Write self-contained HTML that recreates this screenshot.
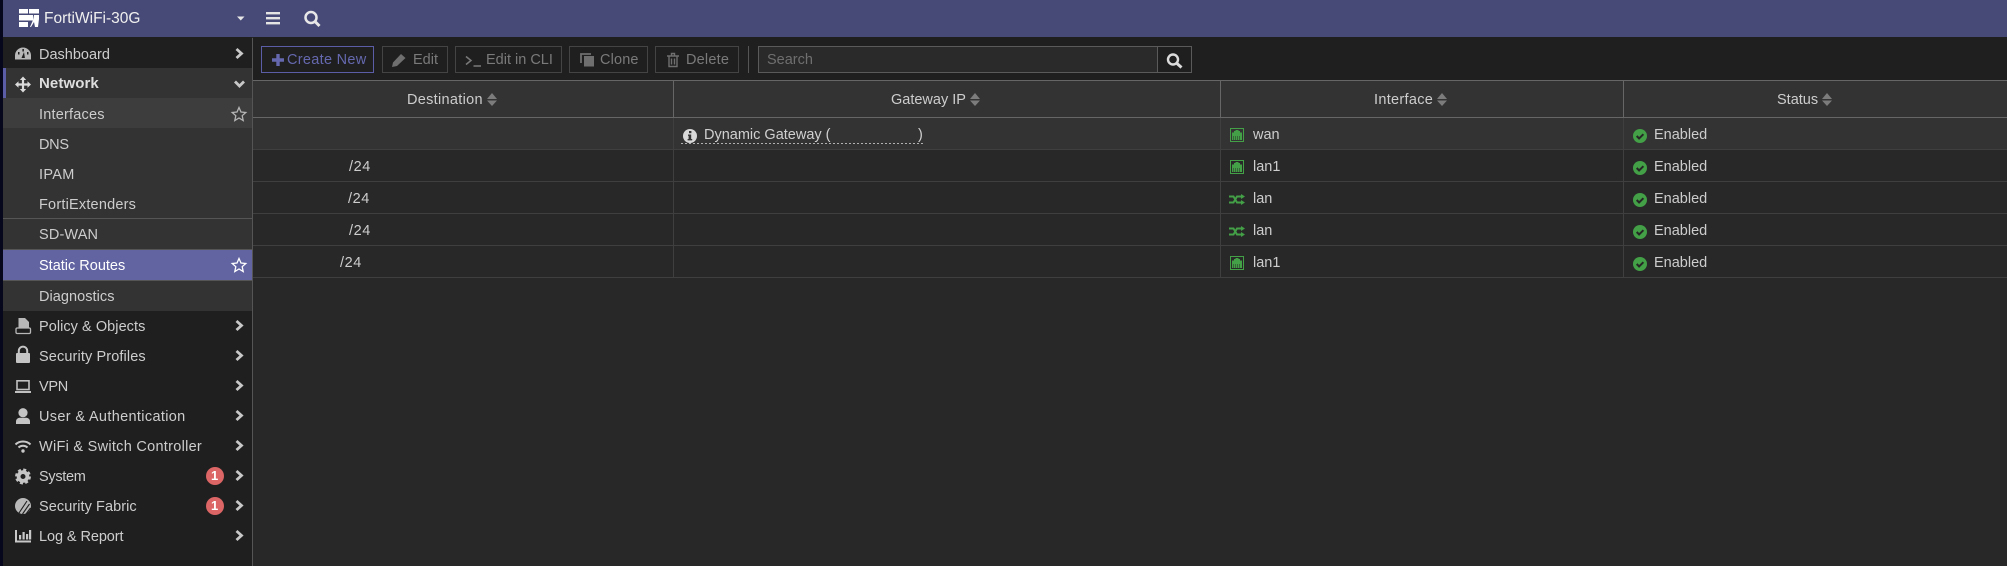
<!DOCTYPE html>
<html><head><meta charset="utf-8"><style>
html,body{margin:0;padding:0;width:2007px;height:566px;overflow:hidden;background:#282828}
body{position:relative;font-family:"Liberation Sans",sans-serif;font-size:14.5px;color:#cdcdcd}
.b{position:absolute}
.t{position:absolute;line-height:20px;white-space:nowrap}
svg{position:absolute;overflow:visible}
.btn{position:absolute;top:46px;height:25px;border:1px solid #444;background:#1f1f1f;box-sizing:content-box}
.d{color:#7a7a7a}
.r{letter-spacing:.6px}
</style></head><body>
<div class="b" style="left:0;top:0;width:3px;height:566px;background:#06061c"></div>
<div class="b" style="left:3px;top:0;width:2004px;height:37px;background:#474a76"></div>
<div class="b" style="left:3px;top:38px;width:249px;height:528px;background:#1f1f1f"></div>
<div class="b" style="left:252px;top:38px;width:1px;height:528px;background:#555"></div>
<div class="b" style="left:253px;top:37px;width:1754px;height:43px;background:#1f1f1f"></div>
<div class="b" style="left:3px;top:37px;width:249px;height:1px;background:#1f1f1f"></div>
<div class="b" style="left:3px;top:68px;width:249px;height:243px;background:#333"></div>
<div class="b" style="left:3px;top:68px;width:3px;height:30px;background:#5b5ea6"></div>
<div class="b" style="left:3px;top:98px;width:249px;height:30px;background:#3d3d3d"></div>
<div class="b" style="left:3px;top:218px;width:249px;height:1px;background:#555"></div>
<div class="b" style="left:3px;top:249px;width:249px;height:32px;background:#6264a2;border-top:1px solid #555;border-bottom:1px solid #555;box-sizing:border-box"></div>

<svg style="left:0;top:0" width="260" height="38">
<g fill="#fff"><rect x="19" y="9" width="9" height="4.500"/><rect x="29" y="9" width="10" height="4.500"/><rect x="19" y="15" width="14" height="5.500"/><rect x="19" y="22" width="9" height="5"/><path d="M34 15h5v4l-1 8h-3l-1-5-3 5h-1l3-7z"/></g>
<path d="M237 16.500h7.500l-3.750 4z" fill="#e8e8e8"/>
<g fill="#e4e4e4"><rect x="266" y="12" width="14" height="2.400"/><rect x="266" y="17" width="14" height="2.400"/><rect x="266" y="22" width="14" height="2.400"/></g>
<circle cx="311" cy="17.500" r="5.500" fill="none" stroke="#e8e8e8" stroke-width="2.500"/><path d="M315 21.500l4.500 4.500" stroke="#e8e8e8" stroke-width="3"/>
</svg>
<div class="t" style="left:44px;top:9px;font-size:15.500px;color:#f0f0f0">FortiWiFi-30G</div>

<div class="t" style="left:39px;top:45px">Dashboard</div>
<div class="t" style="left:39px;top:74px;font-weight:bold;color:#dedede;font-size:15px;letter-spacing:.1px">Network</div>
<div class="t" style="left:39px;top:105px;letter-spacing:.2px">Interfaces</div>
<div class="t" style="left:39px;top:135px;letter-spacing:-.3px">DNS</div>
<div class="t" style="left:39px;top:165px;letter-spacing:.3px">IPAM</div>
<div class="t" style="left:39px;top:195px;letter-spacing:.2px">FortiExtenders</div>
<div class="t" style="left:39px;top:225px;letter-spacing:.15px">SD-WAN</div>
<div class="t" style="left:39px;top:256px;color:#fff">Static Routes</div>
<div class="t" style="left:39px;top:287px;letter-spacing:.05px">Diagnostics</div>
<div class="t" style="left:39px;top:317px;letter-spacing:.05px">Policy &amp; Objects</div>
<div class="t" style="left:39px;top:347px;letter-spacing:.12px">Security Profiles</div>
<div class="t" style="left:39px;top:377px;letter-spacing:-.3px">VPN</div>
<div class="t" style="left:39px;top:407px;letter-spacing:.34px">User &amp; Authentication</div>
<div class="t" style="left:39px;top:437px;letter-spacing:.28px">WiFi &amp; Switch Controller</div>
<div class="t" style="left:39px;top:467px;letter-spacing:-.3px">System</div>
<div class="t" style="left:39px;top:497px;letter-spacing:.07px">Security Fabric</div>
<div class="t" style="left:39px;top:527px;letter-spacing:-.08px">Log &amp; Report</div>

<svg style="left:0;top:0" width="260" height="566">
<g fill="none" stroke="#c8c8c8" stroke-width="2.800">
<path d="M236.500 49l5 4.500-5 4.500"/><path d="M235 81.500l4.500 4.500 4.500-4.500"/>
<path d="M236.500 321l5 4.500-5 4.500"/><path d="M236.500 351l5 4.500-5 4.500"/><path d="M236.500 381l5 4.500-5 4.500"/><path d="M236.500 411l5 4.500-5 4.500"/><path d="M236.500 441l5 4.500-5 4.500"/><path d="M236.500 471l5 4.500-5 4.500"/><path d="M236.500 501l5 4.500-5 4.500"/><path d="M236.500 531l5 4.500-5 4.500"/>
</g>
<path d="M239 107.500l2 4.500 4.800.5-3.600 3.200 1 4.800-4.200-2.500-4.200 2.500 1-4.800-3.600-3.200 4.800-.5z" fill="none" stroke="#b5b5b5" stroke-width="1.300"/>
<path d="M239 258.500l2 4.500 4.800.5-3.600 3.200 1 4.800-4.200-2.500-4.200 2.500 1-4.800-3.600-3.200 4.800-.5z" fill="none" stroke="#fff" stroke-width="1.300"/>
<path d="M15 59.500v-4a8 8 0 0 1 16 0v4z" fill="#b8b8b8"/>
<g fill="#1f1f1f"><rect x="22.400" y="49" width="1.500" height="2.500"/><rect x="18" y="52" width="1.500" height="2.500"/><rect x="27" y="52" width="1.500" height="2.500"/><path d="M21.500 58l2.500-6 .9 6z"/></g>
<path d="M23 78v13M16.500 84.500h13" stroke="#dcdcdc" stroke-width="2.200"/>
<path d="M23 76.500l3.200 3.500h-6.400zM23 92.500l3.200-3.500h-6.400zM15 84.500l3.500-3.200v6.400zM31 84.500l-3.500-3.200v6.400z" fill="#dcdcdc"/>
<path d="M18.500 318h6.500l4 4v7h-10.500z" fill="#b8b8b8"/><rect x="16" y="328" width="14.500" height="5.500" rx="1.200" fill="#1f1f1f" stroke="#b8b8b8" stroke-width="1.300"/>
<path d="M18.800 353v-2.200a4.200 4.200 0 0 1 8.400 0v2.200" fill="none" stroke="#c4c4c4" stroke-width="2"/><rect x="16" y="353" width="14" height="10" rx="1" fill="#c4c4c4"/>
<rect x="17" y="380.800" width="12" height="8.700" fill="none" stroke="#c0c0c0" stroke-width="1.600"/><rect x="15" y="391" width="16" height="2" fill="#c0c0c0"/>
<circle cx="23" cy="412.700" r="4.600" fill="#c4c4c4"/><path d="M16 424v-2.500c0-2.500 2-3.800 4-3.800h6c2 0 4 1.300 4 3.800v2.500z" fill="#c4c4c4"/>
<g fill="none" stroke="#c8c8c8" stroke-width="2"><path d="M15.500 444.500a11 11 0 0 1 15 0"/><path d="M18.500 447.500a6.500 6.500 0 0 1 9 0"/></g><circle cx="23" cy="451" r="1.700" fill="#c8c8c8"/>
<circle cx="23" cy="476.500" r="4.400" fill="none" stroke="#c4c4c4" stroke-width="3.800"/><circle cx="23" cy="476.500" r="6.800" fill="none" stroke="#c4c4c4" stroke-width="2.300" stroke-dasharray="3 2.340"/>
<circle cx="23" cy="506" r="8" fill="#b8b8b8"/><g stroke="#1f1f1f" stroke-width="1.100"><path d="M19 513l8-12M22.500 514l7-10M26 514l4.500-6"/></g>
<path d="M16 530v11.500h15" fill="none" stroke="#c8c8c8" stroke-width="2"/><g fill="#c8c8c8"><rect x="19" y="535" width="2.200" height="4.500"/><rect x="22.500" y="532" width="2.200" height="7.500"/><rect x="26" y="534" width="2.200" height="5.500"/><rect x="29" y="530" width="2.200" height="9.500"/></g>
<circle cx="215" cy="476" r="9" fill="#dc6565"/><circle cx="215" cy="506" r="9" fill="#dc6565"/>
</svg>
<div class="t" style="left:211px;top:466px;font-size:13px;color:#fff;font-weight:bold">1</div>
<div class="t" style="left:211px;top:496px;font-size:13px;color:#fff;font-weight:bold">1</div>

<div class="btn" style="left:261px;width:111px;border-color:#5b5ea6"></div>
<div class="btn" style="left:382px;width:64px"></div>
<div class="btn" style="left:455px;width:105px"></div>
<div class="btn" style="left:569px;width:77px"></div>
<div class="btn" style="left:655px;width:82px"></div>
<div class="b" style="left:748px;top:46px;width:1px;height:27px;background:#555"></div>
<div class="b" style="left:758px;top:46px;width:398px;height:25px;border:1px solid #5a5a5a;background:#2a2a2a"></div>
<div class="b" style="left:1157px;top:46px;width:33px;height:25px;border:1px solid #5a5a5a;background:#1f1f1f"></div>
<div class="t" style="left:287px;top:50px;color:#6568ae;letter-spacing:.3px">Create New</div>
<div class="t d" style="left:413px;top:50px">Edit</div>
<div class="t d" style="left:486px;top:50px">Edit in CLI</div>
<div class="t d" style="left:600px;top:50px;letter-spacing:.15px">Clone</div>
<div class="t d" style="left:686px;top:50px;letter-spacing:.2px">Delete</div>
<div class="t" style="left:767px;top:50px;color:#6f6f6f">Search</div>
<svg style="left:0;top:0" width="1300" height="80">
<path d="M278 54v12M272 60h12" stroke="#6568ae" stroke-width="3.400"/>
<path d="M392 67l1-4.500 8-8.500 4.500 4-8.500 8z" fill="#6f6f6f"/>
<path d="M466 56.500l5 4-5 4M473.500 66h7.500" fill="none" stroke="#7a7a7a" stroke-width="1.500"/>
<path d="M581 63v-9h10" fill="none" stroke="#6f6f6f" stroke-width="1.800"/><rect x="584" y="56" width="10" height="10.500" fill="#6f6f6f"/>
<path d="M667 56h12M669 56v10.500h8v-10.500M671.500 56v-2.500h3v2.500M671.500 58.500v6M674.500 58.500v6" fill="none" stroke="#6f6f6f" stroke-width="1.400"/>
<circle cx="1173" cy="59.500" r="5" fill="none" stroke="#dcdcdc" stroke-width="2.400"/><path d="M1177 63.500l4.500 4" stroke="#dcdcdc" stroke-width="3"/>
</svg>

<div class="b" style="left:253px;top:80px;width:1754px;height:1px;background:#666"></div>
<div class="b" style="left:253px;top:81px;width:1754px;height:68px;background:#333"></div>
<div class="b" style="left:253px;top:117px;width:1754px;height:1px;background:#666"></div>
<div class="b" style="left:253px;top:149px;width:1754px;height:1px;background:#3f3f3f"></div>
<div class="b" style="left:253px;top:181px;width:1754px;height:1px;background:#3f3f3f"></div>
<div class="b" style="left:253px;top:213px;width:1754px;height:1px;background:#3f3f3f"></div>
<div class="b" style="left:253px;top:245px;width:1754px;height:1px;background:#3f3f3f"></div>
<div class="b" style="left:253px;top:277px;width:1754px;height:1px;background:#3f3f3f"></div>
<div class="b" style="left:673px;top:81px;width:1px;height:36px;background:#666"></div>
<div class="b" style="left:1220px;top:81px;width:1px;height:36px;background:#666"></div>
<div class="b" style="left:1623px;top:81px;width:1px;height:36px;background:#666"></div>
<div class="b" style="left:673px;top:118px;width:1px;height:159px;background:#3f3f3f"></div>
<div class="b" style="left:1220px;top:118px;width:1px;height:159px;background:#3f3f3f"></div>
<div class="b" style="left:1623px;top:118px;width:1px;height:159px;background:#3f3f3f"></div>

<div class="t" style="left:407px;top:90px;letter-spacing:.3px">Destination</div>
<div class="t" style="left:891px;top:90px">Gateway IP</div>
<div class="t" style="left:1374px;top:90px;letter-spacing:.3px">Interface</div>
<div class="t" style="left:1777px;top:90px">Status</div>
<svg style="left:0;top:0" width="2007" height="120"><g fill="#7c7c7c">
<path d="M487 99l5-6 5 6zM487 100.500h10l-5 5.500z"/><path d="M970 99l5-6 5 6zM970 100.500h10l-5 5.500z"/><path d="M1437 99l5-6 5 6zM1437 100.500h10l-5 5.500z"/><path d="M1822 99l5-6 5 6zM1822 100.500h10l-5 5.500z"/></g></svg>

<div class="t" style="left:704px;top:125px;color:#d0d0d0">Dynamic Gateway (</div>
<div class="t" style="left:918px;top:125px;color:#d0d0d0">)</div>
<div class="b" style="left:681px;top:143px;width:242px;height:1px;background:repeating-linear-gradient(90deg,#b0b0b0 0 2px,transparent 2px 4px)"></div>
<div class="t r" style="left:349px;top:157px">/24</div>
<div class="t r" style="left:348px;top:189px">/24</div>
<div class="t r" style="left:349px;top:221px">/24</div>
<div class="t r" style="left:340px;top:253px">/24</div>
<div class="t" style="left:1253px;top:125px">wan</div>
<div class="t" style="left:1253px;top:157px">lan1</div>
<div class="t" style="left:1253px;top:189px">lan</div>
<div class="t" style="left:1253px;top:221px">lan</div>
<div class="t" style="left:1253px;top:253px">lan1</div>
<div class="t" style="left:1654px;top:125px">Enabled</div>
<div class="t" style="left:1654px;top:157px">Enabled</div>
<div class="t" style="left:1654px;top:189px">Enabled</div>
<div class="t" style="left:1654px;top:221px">Enabled</div>
<div class="t" style="left:1654px;top:253px">Enabled</div>

<svg style="left:0;top:0" width="2007" height="300">
<defs>
<g id="port"><rect x=".5" y=".5" width="13" height="13" fill="none" stroke="#43a047"/><path d="M2 12V4.500h2V3h1.500V2h3v1h1.500v1.500H12V12z" fill="#43a047"/><path d="M3.500 8v4M5.500 8v4M7.500 8v4M9.500 8v4" stroke="#2a2a2a" stroke-width=".5"/></g>
<g id="sh"><path d="M0 2.500h4.500L8 8.500h4.500M0 8.500h4.500L8 2.500h4.500" fill="none" stroke="#43a047" stroke-width="1.900"/><path d="M12 0l4 2.500L12 5zM12 6l4 2.500L12 11z" fill="#43a047"/></g>
<g id="ok"><circle cx="7" cy="7" r="7" fill="#43a047"/><path d="M3.700 7l2.400 2.500 4.300-4.300" fill="none" stroke="#262626" stroke-width="2"/></g>
</defs>
<circle cx="690" cy="136" r="7" fill="#d8d8d8"/><rect x="689" y="131" width="2.400" height="2.200" fill="#333"/><path d="M688 134.500h3.200v4.500h1v1.400h-4.600v-1.400h1v-3.100h-.6z" fill="#333"/>
<use href="#port" x="1230" y="128"/><use href="#port" x="1230" y="160"/><use href="#sh" x="1229" y="194"/><use href="#sh" x="1229" y="226"/><use href="#port" x="1230" y="256"/>
<use href="#ok" x="1633" y="129"/><use href="#ok" x="1633" y="161"/><use href="#ok" x="1633" y="193"/><use href="#ok" x="1633" y="225"/><use href="#ok" x="1633" y="257"/>
</svg>
</body></html>
